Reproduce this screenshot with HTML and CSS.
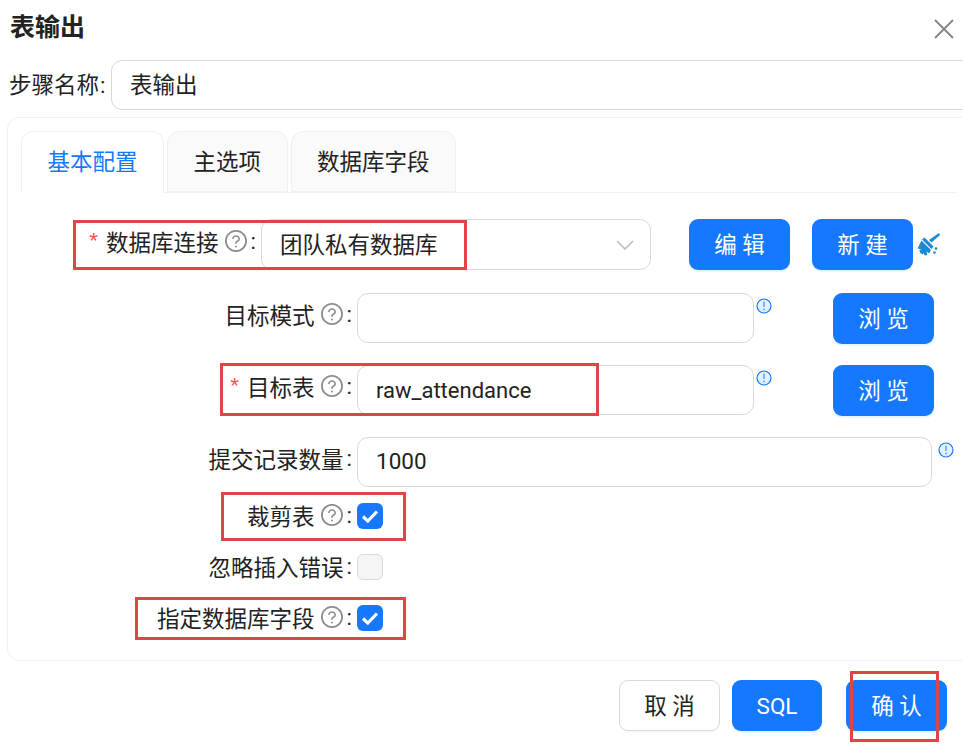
FILE: index.html
```html
<!DOCTYPE html>
<html lang="zh-CN">
<head>
<meta charset="utf-8">
<title>表输出</title>
<link rel="stylesheet" href="styles.css">
</head>
<body>
<svg class="sprites" width="0" height="0" aria-hidden="true">
  <symbol id="q" viewBox="64 64 896 896">
    <path d="M512 64C264.6 64 64 264.6 64 512s200.6 448 448 448 448-200.6 448-448S759.4 64 512 64zm0 820c-205.4 0-372-166.6-372-372s166.6-372 372-372 372 166.6 372 372-166.6 372-372 372z"/>
    <path d="M623.6 316.7C593.6 290.4 554 276 512 276s-81.6 14.5-111.6 40.7C369.2 344 352 380.7 352 420v7.6c0 4.4 3.6 8 8 8h48c4.4 0 8-3.6 8-8V420c0-44.1 43.1-80 96-80s96 35.9 96 80c0 31.1-22 59.6-56.1 72.7-21.2 8.1-39.2 22.3-52.1 40.9-13.1 19-19.9 41.8-19.9 64.9V620c0 4.4 3.6 8 8 8h48c4.4 0 8-3.6 8-8v-22.7a48.3 48.3 0 0 1 30.9-44.8c59-22.7 97.1-74.7 97.1-132.5.1-39.3-17.1-76-48.3-103.3zM472 732a40 40 0 1 0 80 0 40 40 0 1 0-80 0z"/>
  </symbol>
  <symbol id="info" viewBox="0 0 16 16">
    <circle cx="8" cy="8" r="7" fill="#e3f1ff" stroke="#1677ff" stroke-width="1.2"/>
    <path d="M8 3.8v5.2" stroke="#6aa9f2" stroke-width="1.7"/>
    <circle cx="8" cy="11.4" r="1" fill="#6aa9f2"/>
  </symbol>
  <symbol id="check" viewBox="0 0 26 26">
    <path d="M6 13.500l4.800 4.600 9.200-9.600" fill="none" stroke="#fff" stroke-width="3.200"/>
  </symbol>
</svg>
<div class="page">
  <header class="head">
    <h1 class="title">表输出</h1>
    <svg class="close" viewBox="0 0 20 20"><path d="M1 1l18 18M19 1L1 19" stroke="#888" stroke-width="2" fill="none"/></svg>
  </header>
  <div class="name-row">
    <label class="name-label"><span class="t">步骤名称<span class="colon">:</span></span></label>
    <div class="input name-input"><span class="t">表输出</span></div>
  </div>
  <section class="card">
    <nav class="tabs">
      <div class="tab active"><span class="t">基本配置</span></div>
      <div class="tab"><span class="t">主选项</span></div>
      <div class="tab"><span class="t">数据库字段</span></div>
    </nav>
    <div class="form">
      <div class="row row-tall">
        <div class="label label-short"><span class="star">*</span><span class="t">数据库连接</span><svg class="q"><use href="#q"/></svg><span class="colon t">:</span></div>
        <div class="input select"><span class="t">团队私有数据库</span><svg class="chev" viewBox="0 0 18 10"><path d="M1 1l8 8 8-8" fill="none" stroke="#bdbdbd" stroke-width="1.600"/></svg></div>
        <button class="btn edit"><span class="t">编 辑</span></button>
        <button class="btn new"><span class="t">新 建</span></button>
        <svg class="broom" viewBox="0 0 24 24">
          <path d="M23 1l1 2-8.500 7.500-2.500-2.500z" fill="#1a8ad4"/>
          <path d="M8.500 5.500l9 9-2 2.500-9.500-9.500z" fill="#1a8ad4"/>
          <path d="M5.500 8.500l9.500 9.500-2 3.500-2.500-2 0.800 3.500-2.300 0.500-2-2.800 0.300 2-3-1.800-1-2.800 2.300-0.700-4-1z" fill="#1a8ad4"/>
          <circle cx="20" cy="16.500" r="1.300" fill="#1a8ad4"/>
          <circle cx="18.500" cy="20.500" r="1.300" fill="#1a8ad4"/>
        </svg>
      </div>
      <div class="row">
        <div class="label"><span class="t">目标模式</span><svg class="q"><use href="#q"/></svg><span class="colon t">:</span></div>
        <div class="input mid"></div>
        <svg class="info"><use href="#info"/></svg>
        <button class="btn browse"><span class="t">浏 览</span></button>
      </div>
      <div class="row">
        <div class="label"><span class="star">*</span><span class="t">目标表</span><svg class="q"><use href="#q"/></svg><span class="colon t">:</span></div>
        <div class="input mid latin">raw_attendance</div>
        <svg class="info"><use href="#info"/></svg>
        <button class="btn browse"><span class="t">浏 览</span></button>
      </div>
      <div class="row">
        <div class="label"><span class="t">提交记录数量</span><span class="colon gap t">:</span></div>
        <div class="input wide digits">1000</div>
        <svg class="info info-wide"><use href="#info"/></svg>
      </div>
      <div class="row row-check">
        <div class="label"><span class="t">裁剪表</span><svg class="q"><use href="#q"/></svg><span class="colon t">:</span></div>
        <span class="check on"><svg><use href="#check"/></svg></span>
      </div>
      <div class="row row-check">
        <div class="label"><span class="t">忽略插入错误</span><span class="colon gap t">:</span></div>
        <span class="check"></span>
      </div>
      <div class="row row-check">
        <div class="label"><span class="t">指定数据库字段</span><svg class="q"><use href="#q"/></svg><span class="colon t">:</span></div>
        <span class="check on"><svg><use href="#check"/></svg></span>
      </div>
    </div>
  </section>
  <footer class="foot">
    <button class="btn plain"><span class="t">取 消</span></button>
    <button class="btn sql">SQL</button>
    <button class="btn ok"><span class="t">确 认</span></button>
  </footer>
  <div class="mark m1"></div>
  <div class="mark m2"></div>
  <div class="mark m3"></div>
  <div class="mark m4"></div>
  <div class="mark m5"></div>
</div>
</body>
</html>
```

FILE: styles.css
```css
* { box-sizing: border-box; }
html, body { margin: 0; padding: 0; background: #fff; overflow: hidden; }
.sprites { position: absolute; }
.page {
  position: relative;
  width: 963px;
  height: 752px;
  overflow: hidden;
  font-family: Roboto, "Noto Sans CJK SC", sans-serif;
  font-size: 22.5px;
  color: #222;
}
.t { display: inline-block; transform: translateY(-2px); }
.head { display: flex; justify-content: space-between; align-items: center; height: 60px; padding: 0 9px 5px 10px; }
.title { margin: 0; font-size: 25px; font-weight: 700; color: #222; line-height: 1; }
.close { width: 20px; height: 20px; margin-top: 2px; }
.name-row { display: flex; align-items: center; width: 1000px; padding-left: 9px; }
.name-label { width: 102px; flex: none; }
.input {
  display: flex;
  align-items: center;
  height: 50px;
  padding: 0 18px;
  border: 1px solid #d9d9d9;
  border-radius: 11px;
  background: #fff;
  flex: none;
}
.latin { font-size: 22px; }
.digits { padding-bottom: 2px; }
.name-input { flex: 1; }
.card {
  width: 1000px;
  height: 544px;
  margin: 7px 0 0 7px;
  padding-top: 13px;
  border: 1px solid #f0f0f0;
  border-radius: 12px;
}
.tabs {
  display: flex;
  gap: 3px;
  width: 936px;
  height: 62px;
  margin-left: 13px;
  border-bottom: 1px solid #f0f0f0;
}
.tab {
  display: flex;
  align-items: center;
  justify-content: center;
  height: 61px;
  padding: 0 25.500px;
  border: 1px solid #f0f0f0;
  border-radius: 12px 12px 0 0;
  background: #fafafa;
}
.tab.active {
  height: 62px;
  background: #fff;
  color: #1677ff;
  border-bottom-color: #fff;
}
.form { padding-top: 26px; }
.row { display: flex; align-items: flex-start; height: 50px; margin-bottom: 22px; }
.row-tall { height: 51px; margin-bottom: 23px; }
.row-check { align-items: center; height: 26px; margin-bottom: 25px; }
.row:nth-last-child(3) { margin-top: -6px; }
.label {
  display: flex;
  align-items: center;
  justify-content: flex-end;
  flex: none;
  width: 349px;
  height: 100%;
  padding-right: 5px;
  padding-bottom: 4px;
}
.row-check .label { padding-bottom: 0; transform: translateY(1px); }
.label-short { width: 253px; }
.star { color: #ff4d4f; margin-right: 8px; font-family: "Liberation Sans", sans-serif; transform: translateY(-2px); }
.q { width: 22px; height: 22px; margin: 0 3px 0 6px; fill: #8c8c8c; flex: none; transform: translateY(-2px); }
.colon { margin-left: 1px; }
.colon.gap { margin-left: 3px; }
.select { position: relative; width: 390px; height: 51px; }
.chev { position: absolute; right: 16px; top: 20px; width: 18px; height: 10px; }
.mid { width: 397px; }
.wide { width: 575px; }
.info { width: 16px; height: 16px; margin: 5px 0 0 2px; flex: none; }
.info-wide { margin-left: 6px; }
.btn {
  flex: none;
  width: 101px;
  height: 51px;
  padding: 0;
  border: 0;
  border-radius: 9px;
  background: #1677ff;
  box-shadow: 0 2px 0 rgba(5, 145, 255, 0.1);
  color: #fff;
  font: inherit;
}
.edit { margin-left: 38px; }
.new { margin-left: 22px; }
.broom { width: 24px; height: 24px; margin: 13px 0 0 3px; flex: none; }
.browse { margin-left: 61px; }
.check {
  display: block;
  flex: none;
  width: 26px;
  height: 26px;
  border: 1px solid #d9d9d9;
  border-radius: 6px;
  background: #f5f5f5;
}
.check.on { border: 0; background: #1677ff; }
.check svg { display: block; width: 26px; height: 26px; }
.foot { display: flex; justify-content: flex-end; padding: 19px 16px 0 0; }
.plain { background: #fff; border: 1px solid #d9d9d9; color: #222; box-shadow: 0 2px 0 rgba(0, 0, 0, 0.02); }
.sql { width: 90px; margin-left: 12px; }
.ok { margin-left: 24px; }
.mark { position: absolute; border: 3px solid #e04545; pointer-events: none; }
.m1 { left: 73px; top: 220px; width: 394px; height: 50px; }
.m2 { left: 220px; top: 363px; width: 379px; height: 53px; }
.m3 { left: 221px; top: 492px; width: 185px; height: 49px; }
.m4 { left: 135px; top: 597px; width: 271px; height: 43px; }
.m5 { left: 850px; top: 671px; width: 89px; height: 71px; }
```
